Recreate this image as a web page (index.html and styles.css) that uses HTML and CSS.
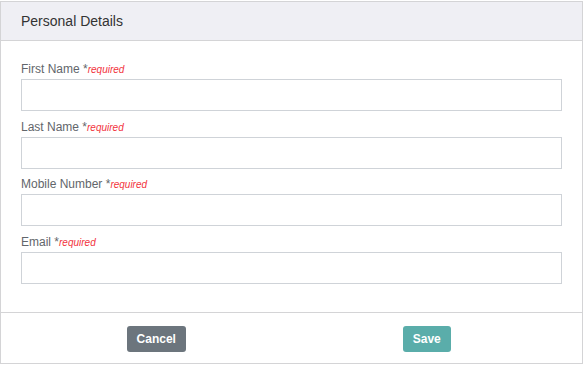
FILE: index.html
```html
<!DOCTYPE html>
<html lang="en">
<head>
  <meta charset="UTF-8">
  <meta name="viewport" content="width=device-width, initial-scale=1.0">
  <title>Personal Details</title>
  <link rel="stylesheet" href="styles.css">
</head>
<body>

  <div class="card">
    <div class="card-header">Personal Details</div>

    <!-- form fields -->
    <div class="card-body">
      <div class="field">
        <label class="label" for="firstName">First Name *<span class="required">required</span></label>
        <input type="text" id="firstName" class="input">
      </div>
      <div class="field">
        <label class="label" for="lastName">Last Name *<span class="required">required</span></label>
        <input type="text" id="lastName" class="input">
      </div>
      <div class="field">
        <label class="label" for="mobile">Mobile Number *<span class="required">required</span></label>
        <input type="text" id="mobile" class="input">
      </div>
      <div class="field">
        <label class="label" for="email">Email *<span class="required">required</span></label>
        <input type="text" id="email" class="input">
      </div>
    </div>

    <div class="card-footer">
      <div class="col"><button class="btn btn-cancel">Cancel</button></div>
      <div class="col"><button class="btn btn-save">Save</button></div>
    </div>
  </div>

</body>
</html>
```

FILE: styles.css
```css
body {
  font-family: 'Liberation Sans', Arial, sans-serif;
  margin: 0;
  padding: 1px 0 0 0;
  background: #fff;
}

.card {
  width: 583px;
  box-sizing: border-box;
  border: 1px solid #d4d4d6;
  background: #fff;
}

.card-header {
  height: 38px;
  line-height: 38px;
  padding: 0 20px;
  background: #efeff4;
  border-bottom: 1px solid #d4d4d6;
  color: #333;
  font-size: 14px;
}

.card-body {
  padding: 20px 20px 20px 20px;
}

.field {
  margin-bottom: 7.67px;
}

.label {
  display: block;
  font-size: 12px;
  line-height: 17px;
  color: #62666b;
  margin-bottom: 1px;
}

.required {
  color: #f2323c;
  font-style: italic;
  font-size: 10px;
}

.input {
  display: block;
  width: 100%;
  height: 32px;
  box-sizing: border-box;
  border: 1px solid #cfd3d8;
  border-radius: 0;
  padding: 4px 8px;
  font-size: 12px;
  outline: none;
}

.card-footer {
  border-top: 1px solid #d4d4d6;
  padding: 13px 20px 11px 20px;
  display: grid;
  grid-template-columns: 1fr 1fr;
}

.col {
  text-align: center;
}

.btn {
  height: 26px;
  padding: 0 10px;
  border: none;
  border-radius: 3px;
  color: #fff;
  font-family: 'Liberation Sans', Arial, sans-serif;
  font-size: 12px;
  font-weight: bold;
  cursor: pointer;
}

.btn-cancel {
  background: #6c757d;
}

.btn-save {
  background: #5aadaa;
}
```
